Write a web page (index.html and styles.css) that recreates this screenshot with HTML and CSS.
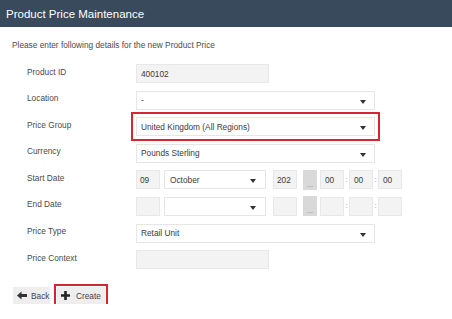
FILE: index.html
```html
<!DOCTYPE html>
<html lang="en">
<head>
<meta charset="utf-8">
<title>Product Price Maintenance</title>
<link rel="stylesheet" href="styles.css">
</head>
<body>
<header class="topbar"><h1 class="title">Product Price Maintenance</h1></header>
<p class="intro">Please enter following details for the new Product Price</p>
<div class="form">
  <div class="label">Product ID</div>
  <div class="field"><div class="box short ro">400102</div></div>

  <div class="label">Location</div>
  <div class="field"><div class="box select wide">-<span class="caret"></span></div></div>

  <div class="label">Price Group</div>
  <div class="field"><div class="box select wide highlight">United Kingdom (All Regions)<span class="caret"></span></div></div>

  <div class="label">Currency</div>
  <div class="field"><div class="box select wide">Pounds Sterling<span class="caret"></span></div></div>

  <div class="label">Start Date</div>
  <div class="field date">
    <div class="box ro day">09</div>
    <div class="box select month">October<span class="caret"></span></div>
    <div class="box ro year">202</div>
    <div class="dots">...</div>
    <div class="box ro tm">00</div><span class="colon">:</span>
    <div class="box ro tm">00</div><span class="colon">:</span>
    <div class="box ro tm">00</div>
  </div>

  <div class="label">End Date</div>
  <div class="field date">
    <div class="box ro day"></div>
    <div class="box select month"><span class="caret"></span></div>
    <div class="box ro year"></div>
    <div class="dots">...</div>
    <div class="box ro tm"></div><span class="colon">:</span>
    <div class="box ro tm"></div><span class="colon">:</span>
    <div class="box ro tm"></div>
  </div>

  <div class="label">Price Type</div>
  <div class="field"><div class="box select wide">Retail Unit<span class="caret"></span></div></div>

  <div class="label">Price Context</div>
  <div class="field"><div class="box short ro"></div></div>
</div>
<div class="actions">
  <button class="btn back" type="button"><svg class="ico" width="10" height="9" viewBox="0 0 10 9"><path d="M0 4.5 L4.5 0.5 L4.5 3 L10 3 L10 6 L4.5 6 L4.5 8.5 Z" fill="#333"/></svg>Back</button>
  <button class="btn create" type="button"><svg class="ico" width="9" height="9" viewBox="0 0 9 9"><path d="M3.2 0 H5.8 V3.2 H9 V5.8 H5.8 V9 H3.2 V5.8 H0 V3.2 H3.2 Z" fill="#222"/></svg>Create</button>
</div>
</body>
</html>
```
FILE: styles.css
```css
* { box-sizing: border-box; }
body {
  margin: 0;
  background: #ffffff;
  font-family: "Liberation Sans", Arial, sans-serif;
  color: #333333;
  font-size: 8.3px;
}
.topbar {
  height: 27px;
  background: #384a5b;
  display: flex;
  align-items: center;
  padding-left: 6px;
}
.title {
  margin: 0;
  font-size: 11.5px;
  font-weight: normal;
  color: #ffffff;
}
.intro {
  margin: 13px 0 0 12px;
  line-height: 10px;
  color: #4a4a4a;
}
.form {
  margin-top: 14px;
  padding-left: 27px;
  display: grid;
  grid-template-columns: 109px 1fr;
  grid-auto-rows: 19px;
  row-gap: 7.6px;
  align-items: center;
}
.label {
  color: #4a4a4a;
  padding-bottom: 4px;
}
.field {
  display: flex;
  align-items: center;
  height: 19px;
}
.box {
  height: 19px;
  border: 1px solid #e6e6e6;
  background: #ffffff;
  display: flex;
  align-items: center;
  padding-left: 4px;
  position: relative;
  color: #3a3a3a;
}
.ro { background: #f3f3f3; border-color: #e8e8e8; }
.short { width: 133px; }
.wide { width: 239px; }
.select { padding-left: 4px; }
.caret {
  position: absolute;
  right: 8px;
  top: 8px;
  width: 0;
  height: 0;
  border-left: 3px solid transparent;
  border-right: 3px solid transparent;
  border-top: 4px solid #333;
}
.highlight {
  outline: 2px solid #d3262e;
  outline-offset: 3px;
}
.date .day { width: 24px; padding-left: 3px; }
.date .month { width: 102px; margin-left: 4px; padding-left: 5px; }
.date .month .caret { right: 9px; }
.date .year { width: 24px; margin-left: 7px; padding-left: 3px; }
.dots {
  width: 14px;
  height: 20px;
  margin-left: 6px;
  background: #d9d9d9;
  color: #777;
  font-size: 7px;
  display: flex;
  align-items: flex-end;
  justify-content: center;
  padding-bottom: 2px;
  line-height: 1;
}
.date .tm { width: 24px; padding-left: 4px; }
.dots + .tm { margin-left: 3px; }
.colon {
  width: 5px;
  text-align: center;
  color: #999;
  font-size: 8px;
  padding-bottom: 1px;
}
.actions {
  display: flex;
  gap: 7px;
  padding-left: 13px;
  margin-top: 18px;
}
.btn {
  height: 17px;
  border: none;
  background: #eeeeee;
  font-family: inherit;
  font-size: 8.3px;
  color: #444;
  display: flex;
  align-items: center;
  padding: 0;
}
.back { width: 37px; padding-left: 4px; }
.back .ico { margin-right: 4px; }
.create {
  width: 48px;
  padding-left: 4px;
  outline: 2px solid #d3262e;
  outline-offset: 1px;
}
.create .ico { margin-right: 6px; }
```
